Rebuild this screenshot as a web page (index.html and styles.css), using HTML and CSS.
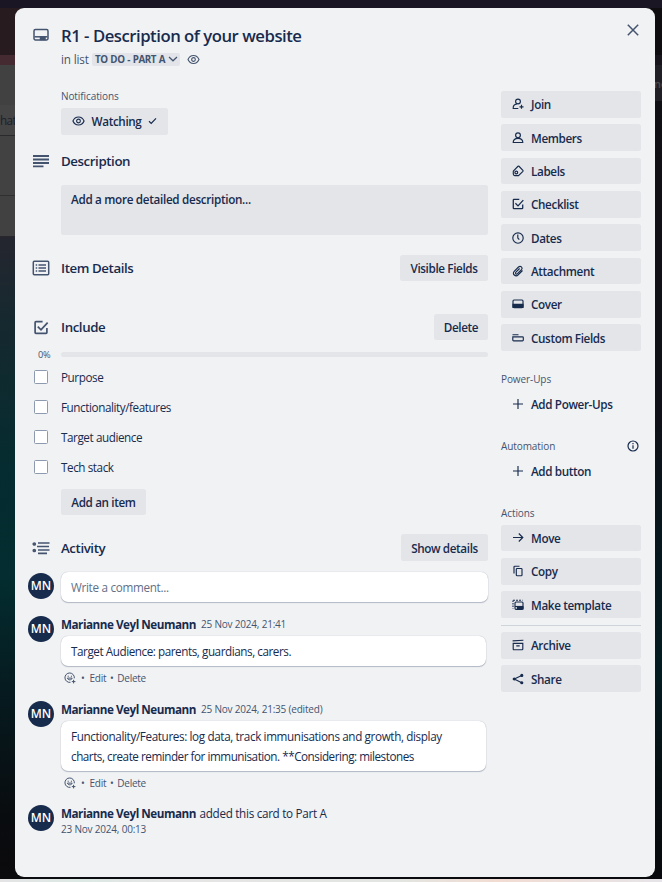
FILE: index.html
```html
<!DOCTYPE html>
<html lang="en">
<head>
<meta charset="utf-8">
<title>R1 - Description of your website</title>
<link rel="stylesheet" href="styles.css">
</head>
<body>
<svg class="defs" aria-hidden="true">
  <symbol id="eye" viewBox="0 0 14 12"><path d="M1 6C2.200 3.200 4.400 1.700 7 1.700S11.800 3.200 13 6C11.800 8.800 9.600 10.300 7 10.300S2.200 8.800 1 6Z"/><circle cx="7" cy="6" r="2"/></symbol>
  <symbol id="smile" viewBox="0 0 12 12"><path d="M10.300 6.300A4.700 4.700 0 1 0 6.500 10.300"/><path d="M3.400 6.100C3.800 8.400 7.700 8.400 8.200 6.100ZM9.600 7.800v3.600M7.800 9.600h3.600M4.200 3.700v1.100M7.400 3.700v1.100"/></symbol>
  <symbol id="check" viewBox="0 0 14 14"><path d="M8.500 1.500H2.300Q1.500 1.500 1.500 2.300V11.700Q1.500 12.500 2.300 12.500H11.700Q12.500 12.500 12.500 11.700V7.500M4 6.200L7 9.200L13.200 2.500"/></symbol>
  <symbol id="plus" viewBox="0 0 12 12"><path d="M6 1v10M1 6h10"/></symbol>
</svg>

<div class="page">
  <div class="edge edge-left">
    <i class="l1"></i><i class="l2"></i><i class="l3"></i><i class="l5">hat</i><i class="l6"></i><i class="l7"></i><i class="l8"></i>
  </div>

  <div class="modal">
    <svg class="close" viewBox="0 0 12 12"><path d="M.8.800l10.400 10.400M11.200.800L.8 11.200"/></svg>
    <main class="main">
      <header class="row title-row">
        <svg class="icon" width="16" height="14" viewBox="0 0 16 14"><rect x="1" y="1.500" width="14" height="10.500" rx="1.400"/><path d="M1.500 8.800h13"/><path class="solid" d="M7.500 9h4.500v2.500H7.500z"/></svg>
        <h1>R1 - Description of your website</h1>
      </header>
      <div class="in-list"><span class="pre">in list</span>
        <span class="list-chip"><b>TO DO - PART A</b><svg width="10" height="6" viewBox="0 0 10 6"><path d="M1 1l4 3.800L9 1"/></svg></span>
        <svg class="watch" width="13" height="11"><use href="#eye"/></svg>
      </div>

      <div class="label notif">Notifications</div>
      <button class="btn watching"><svg width="13" height="12"><use href="#eye"/></svg><span>Watching</span><svg width="9" height="8" viewBox="0 0 9 8"><path d="M1 4.300L3.200 6.400L8 1.300"/></svg></button>

      <section class="row desc">
        <svg class="icon lines" width="16" height="14" viewBox="0 0 16 14"><path d="M0 2h16M0 5.500h16M0 9h16M0 12.300h10.500"/></svg>
        <h2>Description</h2>
      </section>
      <div class="desc-box">Add a more detailed description...</div>

      <section class="row details">
        <svg class="icon" width="18" height="16" viewBox="0 0 18 16"><rect x="1.300" y="1.300" width="15.400" height="13.400" rx="1"/><path d="M6.500 4.900H14M6.500 8H14M6.500 11.100H14M3.700 4.900h1.500M3.700 8h1.500M3.700 11.100h1.500"/></svg>
        <h2>Item Details</h2><button class="btn visible">Visible Fields</button>
      </section>

      <section class="row include">
        <svg class="icon" width="15" height="15"><use href="#check"/></svg>
        <h2>Include</h2><button class="btn delete">Delete</button>
      </section>
      <div class="progress"><span>0%</span><div class="bar"></div></div>
      <ul class="items">
        <li><i class="box"></i><span>Purpose</span></li>
        <li><i class="box"></i><span>Functionality/features</span></li>
        <li><i class="box"></i><span>Target audience</span></li>
        <li><i class="box"></i><span>Tech stack</span></li>
      </ul>
      <button class="btn add-item">Add an item</button>

      <section class="row activity">
        <svg class="icon act" width="18" height="14" viewBox="0 0 18 14"><path d="M6 2h11.500M5 5.500h12M6 9h11.500M6 12.300h9"/><circle cx="2.300" cy="3" r="1"/><circle cx="2.300" cy="9.500" r="1"/></svg>
        <h2>Activity</h2><button class="btn show">Show details</button>
      </section>
      <div class="write"><span class="avatar">MN</span><div class="bubble placeholder">Write a comment...</div></div>

      <article class="comment c1"><span class="avatar">MN</span>
        <div class="body">
          <div class="by"><b>Marianne Veyl Neumann</b><time>25 Nov 2024, 21:41</time></div>
          <div class="bubble"><p class="t1">Target Audience: parents, guardians, carers.</p></div>
          <div class="ops"><svg width="12" height="12"><use href="#smile"/></svg><i>•</i><span>Edit</span><i>•</i><span>Delete</span></div>
        </div>
      </article>
      <article class="comment c2"><span class="avatar">MN</span>
        <div class="body">
          <div class="by"><b>Marianne Veyl Neumann</b><time>25 Nov 2024, 21:35 (edited)</time></div>
          <div class="bubble"><p class="t2">Functionality/Features: log data, track immunisations and growth, display</p><p class="t3">charts, create reminder for immunisation. **Considering: milestones</p></div>
          <div class="ops"><svg width="12" height="12"><use href="#smile"/></svg><i>•</i><span>Edit</span><i>•</i><span>Delete</span></div>
        </div>
      </article>
      <article class="comment c3"><span class="avatar">MN</span>
        <div class="body">
          <div class="by"><b>Marianne Veyl Neumann</b><span class="added">added this card to Part A</span></div>
          <time>23 Nov 2024, 00:13</time>
        </div>
      </article>
    </main>

    <aside class="side">
      <div class="stack">
        <button class="btn"><svg viewBox="0 0 12 12"><circle cx="6" cy="3.500" r="2.400"/><path d="M6.300 10.500H1.200C1 8 2.600 6.300 4.800 6.100M9.500 6.800v4M7.500 8.800h4"/></svg><span>Join</span></button>
        <button class="btn"><svg viewBox="0 0 12 12"><circle cx="6" cy="3.300" r="2.400"/><path d="M1.200 10.500C1.200 7.500 3 6.400 6 6.400s4.800 1.100 4.800 4.100Z"/></svg><span>Members</span></button>
        <button class="btn"><svg viewBox="0 0 12 12"><path d="M1.300 6.200L6 1.300Q6.500.9 7 1.300L10.900 5.300Q11.300 5.800 10.900 6.300L6.500 10.600H2.800Q1.300 10.500 1.300 9Z"/><circle cx="4.300" cy="7.500" r="1.400"/></svg><span>Labels</span></button>
        <button class="btn"><svg class="bold" viewBox="0 0 14 14"><use href="#check"/></svg><span>Checklist</span></button>
        <button class="btn"><svg viewBox="0 0 12 12"><circle cx="6" cy="6" r="5.200"/><path d="M5.800 2.500V6L7.300 7.700"/></svg><span>Dates</span></button>
        <button class="btn"><svg viewBox="0 0 12 12"><path d="M10.500 5.500L6.200 9.900C3.600 12.400-.3 9 2.200 6.300L6.500 2C8.500.2 11.300 2.600 9.500 4.700L5.500 8.700C4.200 9.900 2.800 8.300 3.900 7.200L7.600 3.500"/></svg><span>Attachment</span></button>
        <button class="btn"><svg viewBox="0 0 12 12"><rect x="1" y="2" width="10" height="7.600" rx="1"/><path class="solid" d="M1 6.300h10v3H1z"/></svg><span>Cover</span></button>
        <button class="btn"><svg viewBox="0 0 12 12"><path d="M.5 2.700h6M.8 4.900H10.400Q11.300 4.900 11.300 5.600V8Q11.300 8.800 10.500 8.800H1.600Q.8 8.800.8 8Z"/></svg><span>Custom Fields</span></button>
      </div>
      <div class="label pu">Power-Ups</div>
      <button class="btn ghost"><svg><use href="#plus"/></svg><span>Add Power-Ups</span></button>
      <div class="label auto"><span>Automation</span><svg width="12" height="12" viewBox="0 0 12 12"><circle cx="6" cy="6" r="5"/><path d="M6 5.300v3.500M6 3.100v1.100"/></svg></div>
      <button class="btn ghost"><svg><use href="#plus"/></svg><span>Add button</span></button>
      <div class="label actions">Actions</div>
      <div class="stack">
        <button class="btn"><svg viewBox="0 0 12 12"><path d="M1 5.500h9.800M6.800 1.500l4 4l-4 4"/></svg><span>Move</span></button>
        <button class="btn"><svg viewBox="0 0 12 12"><rect x="4.300" y="3.500" width="5.700" height="7.200" rx=".8"/><path d="M2 8.500V1.900Q2 1.200 2.700 1.200H7.500"/></svg><span>Copy</span></button>
        <button class="btn"><svg viewBox="0 0 12 12"><rect x="3" y="3" width="8" height="7.300" rx="1"/><path class="solid" d="M5.500 7.800h5.500v2.200H5.500z"/><path d="M3 7.500h8"/><path d="M1 1.500v8" stroke-dasharray="1.500 1"/><path d="M1 1.200h9.500" stroke-dasharray="2 1"/></svg><span>Make template</span></button>
      </div>
      <hr>
      <div class="stack last">
        <button class="btn"><svg viewBox="0 0 12 12"><path d="M.6 1.900L11.400 1.200M1.200 4.300h9.600V10Q10.800 10.700 10.100 10.700H1.900Q1.200 10.700 1.200 10ZM4.300 6.800h3.400"/></svg><span>Archive</span></button>
        <button class="btn"><svg viewBox="0 0 12 12"><path d="M9.700 2.500L2.300 6L9.700 9.700"/><g class="dots"><circle cx="9.800" cy="2.400" r="1"/><circle cx="2.200" cy="6" r="1"/><circle cx="9.800" cy="9.700" r="1"/></g></svg><span>Share</span></button>
      </div>
    </aside>
  </div>

  <div class="edge edge-right"><i class="r1"></i><i class="r2"></i><i class="r3">no</i><i class="r4"></i></div>
</div>
<div class="taskbar"></div>
</body>
</html>
```
FILE: styles.css
```css
* { box-sizing: border-box; }
body {
  margin: 0;
  height: 882px;
  overflow: hidden;
  background: #17141f;
  color: #172b4d;
  font: 11.7px/20px "Open Sans", "Noto Sans", sans-serif;
  letter-spacing: -.3px;
}
h1, h2, p, ul { margin: 0; padding: 0; }
h1, h2, p, time, span, b { white-space: nowrap; }
i { font-style: normal; }
svg { fill: none; stroke: currentColor; stroke-width: 1.2; flex: none; display: block; overflow: visible; }
.defs { position: absolute; width: 0; height: 0; }
.solid, .dots { fill: currentColor; }

/* Dimmed board behind the dialog */
.page {
  display: grid;
  grid-template-columns: 15px 640px 7px;
  height: 879px;
  padding-top: 8px;
  background: linear-gradient(#1a1624 8px, transparent 8px), linear-gradient(90deg, #0b0d11, #080a0e);
}
.edge { display: flex; flex-direction: column; }
.edge i { display: block; }
.edge-left { margin-right: -8px; }
.edge-right { margin-left: -8px; }
.l1 { height: 47px; background: #281b1f; }
.l2 { height: 10px; background: #452a31; }
.l3 { height: 40px; background: #414142; }
.l5 { height: 31px; background: #454545; border-bottom: 1px solid #2a2a2c; color: #1b202b; line-height: 30px; overflow: hidden; letter-spacing: -.6px; }
.l6 { height: 60px; background: #424242; border-bottom: 1px solid #303032; }
.l7 { height: 41px; background: #414141; border-bottom: 1px solid #28282c; }
.l8 { flex: 1; background: linear-gradient(#25262f, #15292f 90px, #052c30 230px, #032d30 340px, #061b20 450px, #090c0f 580px, #0b0a0c); }
.r1 { height: 47px; background: #100d11; }
.r2 { height: 10px; background: #18161c; }
.r3 { height: 36px; background: #201f25; color: #4c4b50; padding-left: 7px; line-height: 37px; font-weight: 600; font-size: 11px; overflow: hidden; }
.r4 { flex: 1; background: linear-gradient(#101014, #101118 320px, #07161c 430px, #031b20 570px, #070f12 680px, #08090c); }
.taskbar { height: 3px; background: linear-gradient(90deg, #e4e4e5, #dce8e4 12%, #e5e5e5 25%, #e2e5e1 60%, #f2dcd2 75%, #e6e4e8); }

/* Dialog */
.modal {
  position: relative;
  z-index: 1;
  display: grid;
  grid-template-columns: 473px 140px;
  column-gap: 13px;
  height: 869px;
  border-radius: 9px;
  background: #f1f2f4;
}
.close { position: absolute; left: 612px; top: 16px; width: 12px; height: 12px; color: #44546f; stroke-width: 1.5; }
.main { padding-left: 46px; }
.row { display: flex; align-items: center; height: 27px; }
.icon { width: 18px; margin-left: -29px; margin-right: 11px; color: #44546f; stroke-width: 1.5; }
.row .btn { margin-left: auto; }
.title-row { margin-top: 14px; }
.title-row .icon { margin-top: -2px; }
h1 { font-size: 16.7px; font-weight: 600; letter-spacing: -.47px; line-height: 27px; }
h2 { font-size: 13.3px; font-weight: 600; letter-spacing: -.42px; }
.in-list { display: flex; align-items: center; height: 20px; margin-top: 0; color: #44546f; }
.pre { width: 31px; letter-spacing: -.15px; }
.list-chip { display: flex; align-items: center; gap: 3px; width: 88px; height: 13px; padding-left: 3px; border-radius: 2px; background: #e2e4e9; }
.list-chip b { font-size: 9.8px; letter-spacing: -.45px; word-spacing: .7px; line-height: 13px; }
.watch { margin-left: 7px; }
.label { height: 16px; color: #44546f; font-size: 10px; line-height: 16px; font-weight: 500; letter-spacing: -.09px; }
.notif { margin-top: 19px; }
.btn {
  display: flex;
  align-items: center;
  justify-content: center;
  height: 26.67px;
  padding: 0;
  border: 0;
  border-radius: 2.5px;
  background: #e4e5e9;
  color: #172b4d;
  font: 600 11.7px/20px "Open Sans", "Noto Sans", sans-serif;
  letter-spacing: -.37px;
  white-space: nowrap;
}
.watching { width: 107px; margin-top: 4px; gap: 7px; }
.desc { margin-top: 13px; }
.lines { stroke-width: 1.8; }
.desc-box { height: 50px; margin-top: 10px; padding: 4px 10px; border-radius: 2.5px; background: #e4e5e9; font-weight: 600; letter-spacing: -.31px; }
.details { margin-top: 20px; }
.include { margin-top: 32px; }
.include .icon { stroke-width: 1.6; }
.act { stroke-width: 1.7; }
.visible { width: 88px; }
.delete { width: 54px; }
.progress { display: flex; align-items: center; height: 13px; margin: 7px 0 0 -23px; }
.progress span { width: 23px; padding-top: 1px; color: #44546f; font-size: 9.2px; }
.bar { flex: 1; height: 5px; border-radius: 3px; background: #e4e5e9; }
.items { list-style: none; margin: 1px 0 0 -27px; letter-spacing: -.42px; }
.items li { display: flex; align-items: center; gap: 13px; height: 30px; }
.box { width: 14px; height: 14px; border: 1px solid #8d99ae; border-radius: 1.5px; background: #fff; }
.add-item { width: 85px; margin-top: 7px; }
.activity { margin-top: 19px; }
.show { width: 87px; }
.bubble { padding: 5px 10px; min-height: 30px; border-radius: 7px; background: #fff; box-shadow: 0 1px 1px #091e4240, 0 0 1px #091e424f; }
.avatar { flex: none; width: 26px; height: 26px; margin: 0 7px 0 -33px; border-radius: 50%; background: #172b4d; color: #fff; font-size: 12px; font-weight: 600; line-height: 26px; text-align: center; letter-spacing: 0; }
.write { display: flex; margin-top: 11px; }
.write .avatar { margin-top: .5px; }
.write .bubble { flex: 1; color: #626f86; letter-spacing: -.3px; }
.comment { display: flex; }
.body { flex: 1; margin-right: 2px; }
.comment .avatar { margin-top: 1.5px; }
.c1 { margin-top: 12px; }
.c2 { margin-top: 11px; }
.c3 { margin-top: 10px; }
.t1 { letter-spacing: -.44px; }
.t2 { letter-spacing: -.37px; }
.t3 { letter-spacing: -.47px; }
.by { display: flex; align-items: center; height: 20px; margin-bottom: 2px; }
.by b { width: 135px; letter-spacing: -.48px; }
time { margin-left: 5px; color: #44546f; font-size: 10px; letter-spacing: -.2px; }
.ops { display: flex; align-items: center; height: 20px; margin: 2px 0 0 3px; color: #44546f; font-size: 10px; letter-spacing: -.25px; }
.ops svg { stroke-width: 1; }
.ops i { width: 11px; text-align: center; }
.ops svg + i { width: 13.5px; }
.added { margin-left: 3.5px; letter-spacing: -.3px; }
.c3 time { display: block; margin: -6px 0 0; }

/* Sidebar */
.side { padding-top: 83px; }
.stack { display: grid; gap: 6.67px; }
.side .btn { width: 140px; justify-content: flex-start; padding-left: 11px; gap: 7px; }
.side .btn svg { width: 12px; height: 12px; stroke-width: 1.15; }
.side .btn .bold { stroke-width: 1.5; }
.side .ghost { background: none; }
.pu { margin-top: 20px; }
.pu + .btn { margin-top: 4px; }
.auto { display: flex; justify-content: space-between; align-items: center; padding-right: 2px; margin-top: 20px; }
.auto svg { color: #172b4d; }
.auto + .btn { margin-top: 4px; }
.actions { margin-top: 20.5px; margin-bottom: 4px; }
hr { height: 1px; margin: 7px 0 6px; border: 0; background: #cfd3da; }
```
